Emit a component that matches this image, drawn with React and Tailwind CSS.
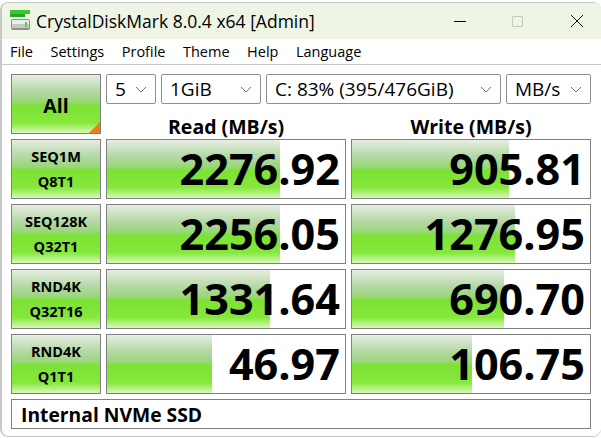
const rows = [
  { a: "SEQ1M", b: "Q8T1", read: "2276.92", readW: 173, write: "905.81", writeW: 157 },
  { a: "SEQ128K", b: "Q32T1", read: "2256.05", readW: 173, write: "1276.95", writeW: 163 },
  { a: "RND4K", b: "Q32T16", read: "1331.64", readW: 163, write: "690.70", writeW: 152 },
  { a: "RND4K", b: "Q1T1", read: "46.97", readW: 105, write: "106.75", writeW: 120 },
];

const green =
  "bg-[linear-gradient(to_bottom,#e6eee2_0%,#b4d8a4_28%,#9ad67c_46%,#7ce234_52%,#86e83c_82%,#d8f8b8_100%)]";

function Combo({ label, className }) {
  return (
    <div className={`h-[30px] flex items-center justify-between pl-2 pr-2 border border-[#8f8f8f] rounded-[2px] bg-white text-[19px] ${className}`}>
      <span className="pt-[1px]">{label}</span>
      <svg width="12" height="7" viewBox="0 0 12 7" fill="none" stroke="#707070" strokeWidth="1">
        <path d="M1 1l5 5 5-5" />
      </svg>
    </div>
  );
}

function Score({ value, width, className }) {
  return (
    <div className={`relative h-[60px] border border-[#808080] bg-white overflow-hidden ${className}`}>
      <div className={`absolute left-0 top-0 bottom-0 ${green}`} style={{ width }} />
      <div className="relative h-full flex items-center justify-end pr-[5px] text-[43.2px] font-bold text-black leading-none">
        {value}
      </div>
    </div>
  );
}

export default function App() {
  return (
    <div className="w-[601px] h-[438px] bg-white overflow-hidden text-black font-['Open_Sans','Noto_Sans',sans-serif]">
      <div className="relative h-[435px] mt-[2px] w-[601px] border-l-2 border-t border-b border-[#c8c8c8] rounded-t-[8px] rounded-b-[8px] overflow-hidden bg-white">
        <div className="h-[36px] bg-[#eef5e4] flex items-center">
          <svg width="20" height="20" viewBox="0 0 20 20" className="ml-[8px] mb-[3px]">
            <rect x="0" y="0" width="20" height="4" fill="#35c92c" />
            <rect x="0" y="4" width="15" height="3" fill="#27a824" />
            <rect x="1" y="9" width="19" height="11" rx="2" fill="#8d918d" />
            <rect x="2" y="10" width="17" height="4" fill="#eceeec" />
            <rect x="2" y="14" width="17" height="4" fill="#c4c8c4" />
            <rect x="15" y="12" width="2" height="5" fill="#5ecb3c" />
          </svg>
          <span className="ml-[6px] text-[17.5px]">CrystalDiskMark 8.0.4 x64 [Admin]</span>
          <div className="ml-auto flex items-center">
            <div className="w-[12px] h-[1px] bg-black mr-[46px]" />
            <div className="w-[11px] h-[11px] border border-[#c4c8c0] rounded-[1px] mr-[48px]" />
            <svg width="12" height="12" viewBox="0 0 12 12" stroke="#111" strokeWidth="1" className="mr-[18px]">
              <path d="M0 0l12 12M12 0L0 12" />
            </svg>
          </div>
        </div>
        <div className="h-[24px] flex items-center gap-[17.5px] pl-[8px] pt-[1px] text-[14.5px] border-b border-[#c8c8c8] box-content">
          <span>File</span>
          <span>Settings</span>
          <span>Profile</span>
          <span>Theme</span>
          <span>Help</span>
          <span>Language</span>
        </div>
        <div className="pl-[9px] pt-[9px]">
          <div className="flex gap-[5px]">
            <div className={`relative w-[90px] h-[60px] border border-[#808080] flex items-center justify-center pt-[4px] text-[19.5px] font-bold ${green}`}>
              All
              <div className="absolute right-0 bottom-0 w-0 h-0 border-l-[11px] border-l-transparent border-b-[11px] border-b-[#f07c1c]" />
            </div>
            <div className="flex flex-col">
              <div className="flex gap-[5px]">
                <Combo label="5" className="w-[50px]" />
                <Combo label="1GiB" className="w-[100px]" />
                <Combo label="C: 83% (395/476GiB)" className="w-[235px]" />
                <Combo label="MB/s" className="w-[85px]" />
              </div>
              <div className="flex gap-[5px] h-[35px] items-center text-[19.5px] font-bold pt-[11px]">
                <div className="w-[240px] text-center">Read (MB/s)</div>
                <div className="w-[240px] text-center">Write (MB/s)</div>
              </div>
            </div>
          </div>
          <div className="flex flex-col gap-[5px]">
            {rows.map((r) => (
              <div key={r.a + r.b} className="flex gap-[5px]">
                <div className={`w-[90px] h-[60px] border border-[#808080] flex flex-col items-center justify-center gap-[5px] text-[14.5px] leading-[20px] font-bold ${green}`}>
                  <span>{r.a}</span>
                  <span>{r.b}</span>
                </div>
                <Score value={r.read} width={r.readW} className="w-[240px]" />
                <Score value={r.write} width={r.writeW} className="w-[240px]" />
              </div>
            ))}
          </div>
          <div className="mt-[5px] w-[580px] h-[30px] border border-[#808080] flex items-center pl-[9px] pt-[3px] text-[19.3px] font-bold">
            Internal NVMe SSD
          </div>
        </div>
        <div className="absolute right-0 bottom-0 w-0 h-0 border-l-[5px] border-l-transparent border-b-[5px] border-b-[#c0c0c0]" />
      </div>
    </div>
  );
}
